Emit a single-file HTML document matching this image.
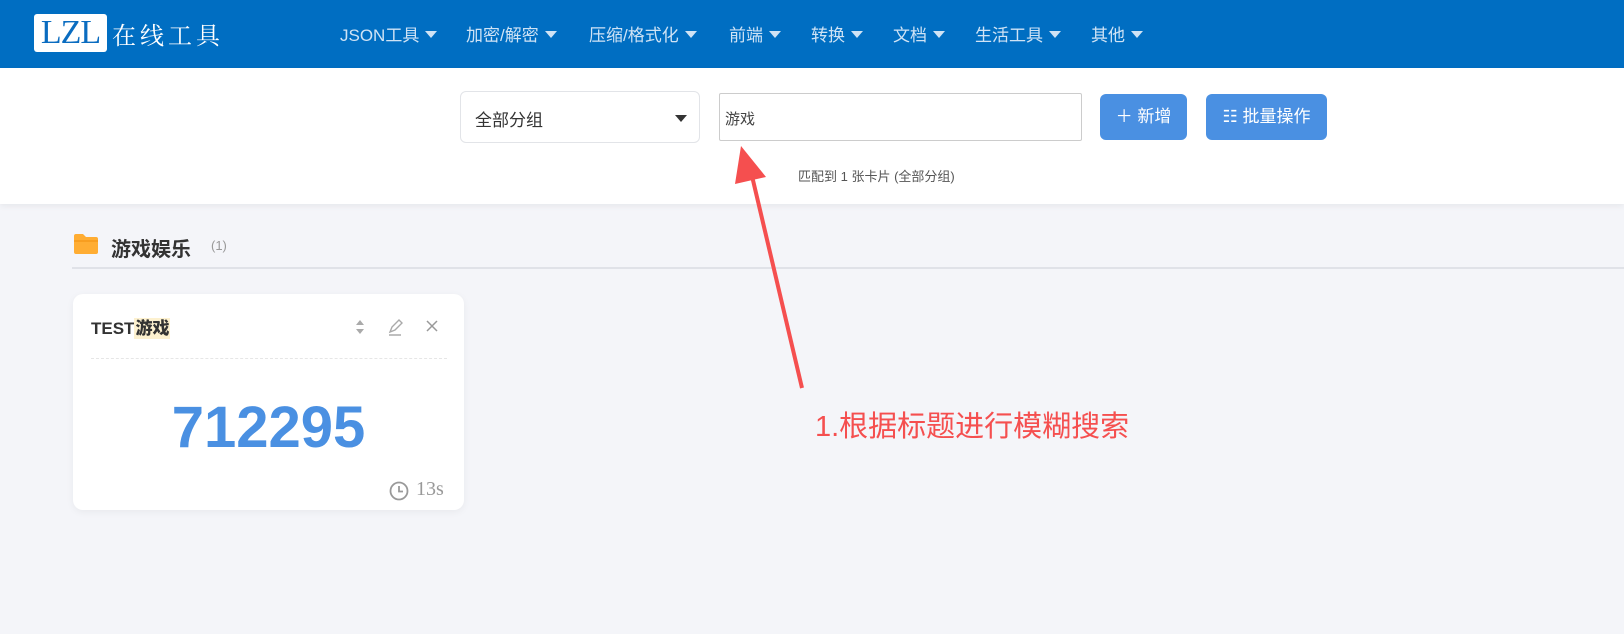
<!DOCTYPE html>
<html><head><meta charset="utf-8"><style>
*{margin:0;padding:0;box-sizing:border-box}
body{width:1624px;height:634px;overflow:hidden;background:#f4f5f9;font-family:"Liberation Sans","Noto Sans CJK SC",sans-serif;position:relative}
.nav{position:absolute;left:0;top:0;width:1624px;height:68px;background:#006ec2}
.logo{position:absolute;left:34px;top:14px;width:73px;height:38px;background:#fff;border-radius:3px;color:#0a6cc0;font-family:"Liberation Serif",serif;font-size:34px;line-height:38px;text-align:center;letter-spacing:-1px}
.logot{position:absolute;left:112px;top:16px;color:#fff;font-family:"Noto Serif CJK SC",serif;font-size:24px;letter-spacing:4px}
.menu{position:absolute;top:21px;color:#cfe3f5;font-size:17px;white-space:nowrap}
.menu span{position:absolute}
.tri{display:inline-block;width:0;height:0;border-left:6px solid transparent;border-right:6px solid transparent;border-top:7px solid #cfe3f5;margin-left:6px;vertical-align:3px}
.bar{position:absolute;left:0;top:68px;width:1624px;height:136px;background:#fff;box-shadow:0 2px 6px rgba(0,0,0,.06)}
.sel{position:absolute;left:460px;top:91px;width:240px;height:52px;border:1px solid #e2e4e8;border-radius:6px;background:#fff;font-size:17px;color:#333;padding:14px 0 0 14px}
.sel i{position:absolute;right:12px;top:23px;border-left:6px solid transparent;border-right:6px solid transparent;border-top:7px solid #333}
.inp{position:absolute;left:719px;top:93px;width:363px;height:48px;border:1px solid #ccc;border-radius:2px;font-size:15px;color:#444;padding:14px 0 0 5px}
.btn{position:absolute;top:94px;height:46px;background:#4a90e2;color:#fff;border-radius:6px;font-size:17px;line-height:46px;text-align:center}
.hint{position:absolute;left:798px;top:166px;font-size:13px;color:#555}
.ftitle{position:absolute;left:111px;top:233px;font-size:20px;font-weight:bold;color:#333}
.cnt{position:absolute;left:211px;top:238px;font-size:13px;color:#999}
.line{position:absolute;left:72px;top:267px;width:1552px;height:2px;background:#e0e2e8}
.card{position:absolute;left:73px;top:294px;width:391px;height:216px;background:#fff;border-radius:10px;box-shadow:0 2px 8px rgba(0,0,0,.05)}
.ct{position:absolute;left:18px;top:20px;font-size:17px;font-weight:bold;color:#333}
.ct b{background:#fdf1cf;padding:1px 1px}
.dash{position:absolute;left:18px;top:64px;width:356px;border-top:1px dashed #e6e6e6}
.num{position:absolute;left:0;top:100px;width:391px;text-align:center;font-size:58px;font-weight:bold;color:#4a90e2}
.time{position:absolute;left:343px;top:184px;font-size:20px;color:#999;font-family:"Liberation Serif",serif}
.red{position:absolute;left:815px;top:403px;font-size:29px;color:#f54f4f}
</style></head><body>
<div class="nav">
<div class="logo">LZL</div>
<div class="logot">在线工具</div>
<div class="menu">
<span style="left:340px">JSON工具<i class="tri"></i></span>
<span style="left:466px">加密/解密<i class="tri"></i></span>
<span style="left:589px">压缩/格式化<i class="tri"></i></span>
<span style="left:729px">前端<i class="tri"></i></span>
<span style="left:811px">转换<i class="tri"></i></span>
<span style="left:893px">文档<i class="tri"></i></span>
<span style="left:975px">生活工具<i class="tri"></i></span>
<span style="left:1091px">其他<i class="tri"></i></span>
</div></div>
<div class="bar"></div>
<div class="sel">全部分组<i></i></div>
<div class="inp">游戏</div>
<div class="btn" style="left:1100px;width:87px">＋ 新增</div>
<div class="btn" style="left:1206px;width:121px">☷ 批量操作</div>
<div class="hint">匹配到 1 张卡片 (全部分组)</div>
<svg style="position:absolute;left:73px;top:233px" width="26" height="22"><path d="M1 3a2 2 0 0 1 2-2h7l3 3h10a2 2 0 0 1 2 2v13a2 2 0 0 1-2 2H3a2 2 0 0 1-2-2z" fill="#ffad33"/><path d="M1 8h24" stroke="#f59a1b" stroke-width="1.5"/></svg>
<div class="ftitle">游戏娱乐</div>
<div class="cnt">(1)</div>
<div class="line"></div>
<div class="card">
<div class="ct">TEST<b>游戏</b></div>
<svg style="position:absolute;left:280px;top:24px" width="90" height="18"><path d="M3 7l4-5 4 5z M3 11l4 5 4-5z" fill="#aaa"/><path d="M37 14l2-5 7-7 3 3-7 7-5 2zM36 17h12" stroke="#aaa" stroke-width="1.4" fill="none"/><path d="M74 3l10 10M84 3l-10 10" stroke="#999" stroke-width="1.5"/></svg>
<div class="dash"></div>
<div class="num">712295</div>
<svg style="position:absolute;left:316px;top:187px" width="20" height="20"><circle cx="10" cy="10" r="8.5" fill="none" stroke="#999" stroke-width="1.8"/><path d="M10 5v5.5h4" stroke="#999" stroke-width="1.8" fill="none"/></svg>
<div class="time">13s</div>
</div>
<svg style="position:absolute;left:0;top:0" width="1624" height="634"><path d="M802 388L752 176" stroke="#f54f4f" stroke-width="4"/><path d="M741 146L735 184L766 177z" fill="#f54f4f"/></svg>
<div class="red">1.根据标题进行模糊搜索</div>
</body></html>
